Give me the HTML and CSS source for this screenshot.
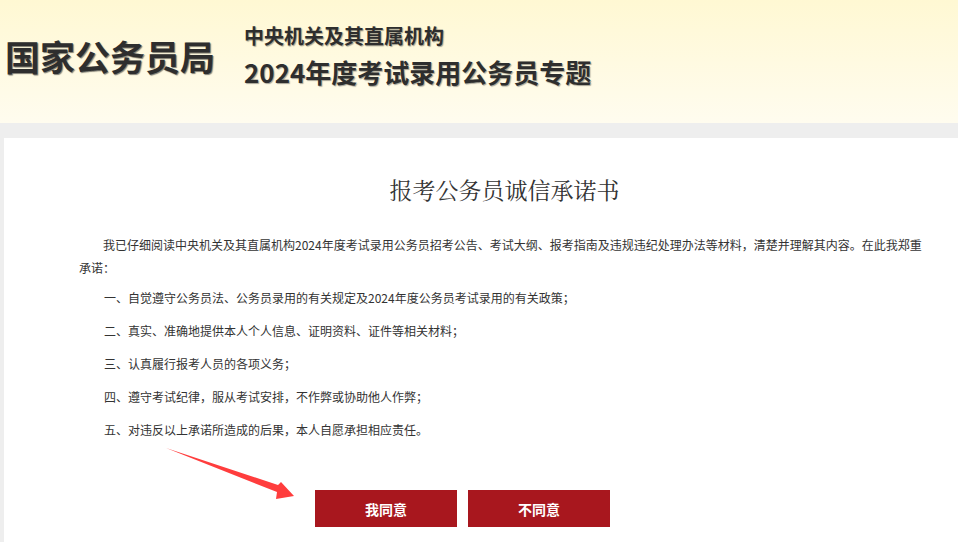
FILE: index.html
```html
<!DOCTYPE html>
<html lang="zh-CN">
<head>
    <meta charset="UTF-8">
    <meta name="viewport" content="width=device-width, initial-scale=1.0">
    <title>报考公务员诚信承诺书</title>
    <link rel="stylesheet" href="styles.css">
</head>
<body>
    <div class="header">
        <div class="header-row">
            <div class="logo">国家公务员局</div>
            <div class="subject">
                <div class="subject-top">中央机关及其直属机构</div>
                <div class="subject-main">2024年度考试录用公务员专题</div>
            </div>
        </div>
    </div>

    <div class="card">
        <h1 class="card-title">报考公务员诚信承诺书</h1>

        <p class="intro">我已仔细阅读中央机关及其直属机构2024年度考试录用公务员招考公告、考试大纲、报考指南及违规违纪处理办法等材料，清楚并理解其内容。在此我郑重承诺：</p>

        <p class="item">一、自觉遵守公务员法、公务员录用的有关规定及2024年度公务员考试录用的有关政策；</p>
        <p class="item">二、真实、准确地提供本人个人信息、证明资料、证件等相关材料；</p>
        <p class="item">三、认真履行报考人员的各项义务；</p>
        <p class="item">四、遵守考试纪律，服从考试安排，不作弊或协助他人作弊；</p>
        <p class="item">五、对违反以上承诺所造成的后果，本人自愿承担相应责任。</p>

        <div class="actions">
            <button class="btn" type="button">我同意</button>
            <button class="btn" type="button">不同意</button>
        </div>

        <!-- pointer arrow drawn over the page -->
        <svg class="arrow" width="140" height="62" viewBox="0 0 140 62">
            <polygon points="10,8 122,45 125,42 138,56 120,59 121,52" fill="#ff3d3d" />
        </svg>
    </div>
</body>
</html>
```

FILE: styles.css
```css
body {
    margin: 0;
    background: #eeeeee;
    font-family: "Noto Sans CJK SC", "Noto Sans", sans-serif;
    color: #333;
    overflow: hidden;
}
.header {
    height: 123px;
    background: linear-gradient(to bottom, #fff8d3, #fffcef);
}
.header-row {
    display: flex;
    align-items: center;
    padding-top: 22px;
    padding-left: 5px;
}
.logo {
    font-size: 35px;
    font-weight: 700;
    line-height: 40px;
    width: 239px;
    color: #2e2e2e;
    text-shadow: 1px 1px 1px rgba(0, 0, 0, 0.5);
}
.subject {
    color: #2e2e2e;
    font-weight: 700;
    text-shadow: 1px 1px 1px rgba(0, 0, 0, 0.35);
}
.subject-top {
    font-size: 20px;
    line-height: 28px;
}
.subject-main {
    font-size: 26px;
    line-height: 34px;
    margin-top: 5px;
}
.card {
    position: relative;
    box-sizing: border-box;
    margin: 15px 0 0 4px;
    padding: 37px 28px 0 75px;
    background: #fff;
    min-height: 404px;
}
.card-title {
    margin: 0;
    text-align: center;
    font-family: "Noto Serif CJK SC", "Noto Sans CJK SC", serif;
    font-size: 23px;
    font-weight: 400;
    line-height: 30px;
    color: #333;
}
.intro, .item {
    font-size: 12px;
    line-height: 23px;
    margin: 0;
    color: #333;
}
.intro {
    margin-top: 28px;
    max-width: 850px;
    text-indent: 24px;
}
.item {
    padding-left: 25px;
    margin-top: 10px;
}
.intro + .item {
    margin-top: 7px;
}
.actions {
    display: flex;
    gap: 11px;
    margin-top: 49px;
    padding-left: 236px;
}
.btn {
    width: 142px;
    height: 37px;
    border: none;
    background: #a8171e;
    color: #fff;
    font-family: "Noto Sans CJK SC", sans-serif;
    font-size: 14px;
    font-weight: 700;
    cursor: pointer;
}
.arrow {
    position: absolute;
    left: 152px;
    top: 302px;
}
```
